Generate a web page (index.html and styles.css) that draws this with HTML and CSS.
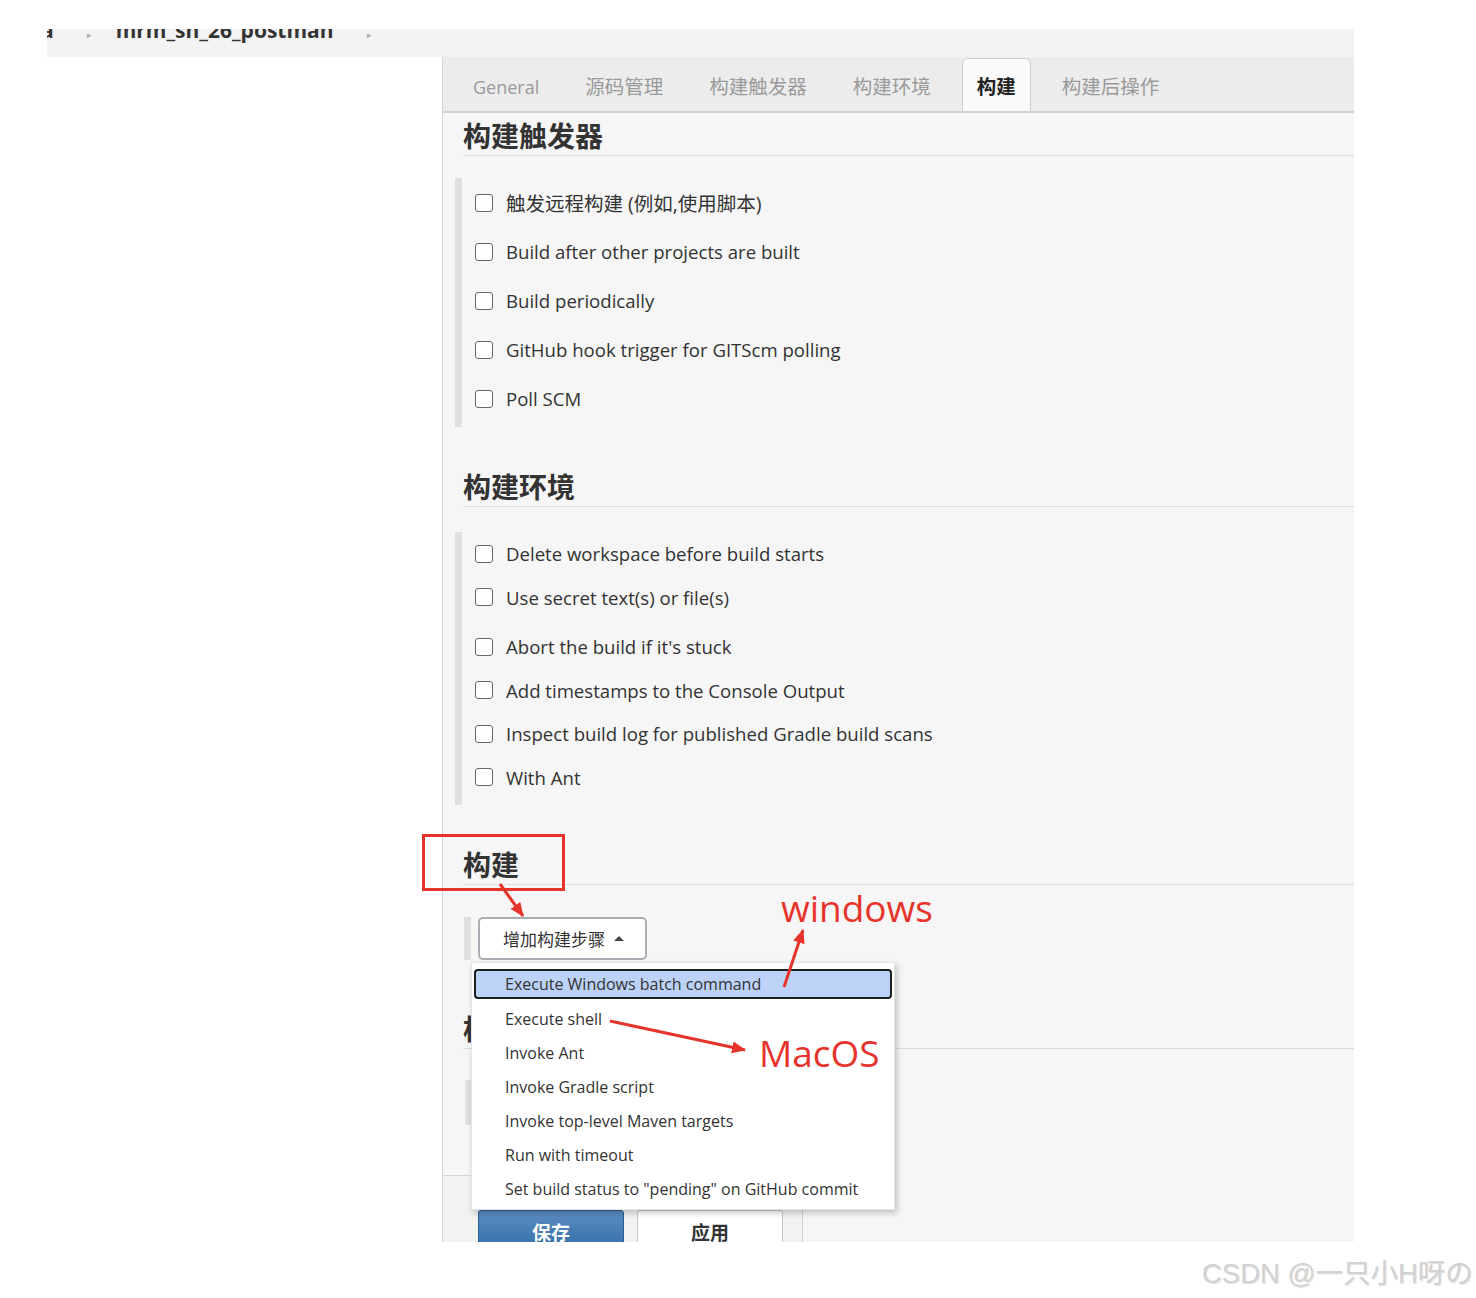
FILE: index.html
```html
<!DOCTYPE html>
<html lang="zh-CN">
<head>
    <meta charset="UTF-8">
    <meta name="viewport" content="width=device-width, initial-scale=1.0">
    <title>mrm_sh_26_postman Config [Jenkins]</title>
    <link rel="stylesheet" href="styles.css">
</head>
<body>
<div class="page">
    <div class="shot">
        <div class="crumbs">
            <div class="crumbs-line">
                <span class="crumb-cut">a</span>
                <span class="sep">▸</span>
                <span class="crumb">mrm_sh_26_postman</span>
                <span class="sep sep-last">▸</span>
            </div>
        </div>

        <div class="layout">
            <aside class="side"></aside>

            <main class="panel">
                <nav class="tabs">
                    <a class="tab tab-en">General</a>
                    <a class="tab">源码管理</a>
                    <a class="tab">构建触发器</a>
                    <a class="tab">构建环境</a>
                    <a class="tab active">构建</a>
                    <a class="tab">构建后操作</a>
                </nav>

                <section class="config-section">
                    <h2 class="section-title first">构建触发器</h2>
                    <div class="opt-group">
                        <label class="opt opt-cn"><span class="box"></span>触发远程构建 (例如,使用脚本)</label>
                        <label class="opt"><span class="box"></span>Build after other projects are built</label>
                        <label class="opt"><span class="box"></span>Build periodically</label>
                        <label class="opt"><span class="box"></span>GitHub hook trigger for GITScm polling</label>
                        <label class="opt"><span class="box"></span>Poll SCM</label>
                    </div>
                </section>

                <section class="config-section">
                    <h2 class="section-title">构建环境</h2>
                    <div class="opt-group env">
                        <label class="opt"><span class="box"></span>Delete workspace before build starts</label>
                        <label class="opt spaced"><span class="box"></span>Use secret text(s) or file(s)</label>
                        <label class="opt"><span class="box"></span>Abort the build if it's stuck</label>
                        <label class="opt"><span class="box"></span>Add timestamps to the Console Output</label>
                        <label class="opt"><span class="box"></span>Inspect build log for published Gradle build scans</label>
                        <label class="opt"><span class="box"></span>With Ant</label>
                    </div>
                </section>

                <section class="config-section">
                    <h2 class="section-title">构建</h2>
                    <div class="build-group">
                        <button class="add-step">增加构建步骤<span class="caret"></span></button>
                        <ul class="step-menu">
                            <li class="active">Execute Windows batch command</li>
                            <li>Execute shell</li>
                            <li>Invoke Ant</li>
                            <li>Invoke Gradle script</li>
                            <li>Invoke top-level Maven targets</li>
                            <li>Run with timeout</li>
                            <li>Set build status to "pending" on GitHub commit</li>
                        </ul>
                    </div>
                </section>

                <section class="config-section post">
                    <h2 class="section-title">构建后操作</h2>
                    <div class="post-group"></div>
                </section>

                <div class="bottom-bar">
                    <button class="btn btn-primary">保存</button>
                    <button class="btn btn-plain">应用</button>
                </div>
            </main>
        </div>
    </div>

    <!-- red markup drawn on top of the page -->
    <svg class="marks" width="1476" height="1298" viewBox="0 0 1476 1298">
        <defs>
            <marker id="head" markerUnits="userSpaceOnUse" markerWidth="14" markerHeight="12" refX="13" refY="6" orient="auto">
                <path d="M0,0 L14,6 L0,12 z" fill="#e6342c"/>
            </marker>
        </defs>
        <rect x="423.5" y="835.5" width="140" height="54" fill="none" stroke="#e6342c" stroke-width="3"/>
        <line x1="500" y1="884" x2="523" y2="916" stroke="#e6342c" stroke-width="3" marker-end="url(#head)"/>
        <line x1="784" y1="987" x2="803" y2="930" stroke="#e6342c" stroke-width="3" marker-end="url(#head)"/>
        <line x1="610" y1="1021" x2="745" y2="1050" stroke="#e6342c" stroke-width="3" marker-end="url(#head)"/>
    </svg>
    <div class="mark-label label-win">windows</div>
    <div class="mark-label label-mac">MacOS</div>

    <div class="watermark">CSDN @一只小H呀の</div>
</div>
</body>
</html>
```

FILE: styles.css
```css
* {
    margin: 0;
    padding: 0;
    box-sizing: border-box;
}

body {
    background-color: #fff;
    color: #333;
    font-family: "Open Sans", "Noto Sans CJK SC", sans-serif;
}

.page {
    position: relative;
    width: 1476px;
    height: 1298px;
    overflow: hidden;
}

.shot {
    margin: 29px 0 0 47px;
    width: 1307px;
}

/* breadcrumb strip */
.crumbs {
    height: 28px;
    background-color: #f3f3f3;
    overflow: hidden;
}

.crumbs-line {
    display: flex;
    align-items: baseline;
    height: 28px;
    line-height: 28px;
    margin-top: -13px;
    font-size: 21px;
    font-weight: 700;
    color: #333;
    white-space: nowrap;
}

.crumb-cut {
    margin-left: -6px;
}

.sep {
    font-size: 9px;
    font-weight: 400;
    color: #aaa;
    margin: 0 24px 0 33px;
}

.sep-last {
    margin-left: 33px;
}

/* page body */
.layout {
    display: flex;
    height: 1185px;
}

.side {
    width: 395px;
    background-color: #fff;
}

.panel {
    width: 912px;
    background-color: #f6f6f6;
    border-left: 1px solid #d6d6d6;
    overflow: hidden;
}

.tabs {
    display: flex;
    align-items: flex-end;
    height: 56px;
    padding-left: 15px;
    background-color: #ececec;
    border-bottom: 2px solid #d2d2d2;
}

.tab {
    height: 53px;
    padding: 3px 14px 0;
    margin-right: 16px;
    line-height: 50px;
    font-size: 19.5px;
    color: #9a9a9a;
    border: 1px solid transparent;
    border-bottom: none;
    border-radius: 6px 6px 0 0;
}

.tab.tab-en {
    font-size: 18px;
}

.tab.active {
    background-color: #fafafa;
    border-color: #cfcfcf;
    color: #222;
    font-weight: 700;
}

.config-section {
    padding-left: 12px;
}

.section-title {
    margin: 39px 0 0 8px;
    font-family: "Noto Sans CJK SC", sans-serif;
    font-size: 28px;
    font-weight: 700;
    line-height: 40px;
    color: #333;
    border-bottom: 1px solid #dcdcdc;
}

.section-title.first {
    margin-top: 2px;
}

.opt-group {
    margin-top: 22px;
    padding: 0 0 4px 13px;
    border-left: 7px solid #e0e0e0;
}

.opt-group.env {
    margin-top: 25px;
    padding-bottom: 6px;
}

.opt {
    display: flex;
    align-items: center;
    height: 49px;
    font-size: 18.6px;
    color: #333;
}

.opt.opt-cn {
    font-size: 19.5px;
}

.env .opt {
    height: 43.5px;
}

.env .opt.spaced {
    margin-bottom: 6px;
}

.box {
    flex: none;
    width: 18px;
    height: 18px;
    margin-right: 13px;
    background-color: #fff;
    border: 1.5px solid #666;
    border-radius: 3px;
}

/* build steps */
.build-group {
    position: relative;
    height: 43px;
    margin: 32px 0 0 9px;
    padding-left: 7px;
    border-left: 7px solid #e0e0e0;
}

.add-step {
    display: flex;
    align-items: center;
    width: 169px;
    height: 43px;
    padding-left: 23px;
    background-color: #fff;
    border: 2px solid #a9aeb4;
    border-radius: 5px;
    font-family: "Noto Sans CJK SC", sans-serif;
    font-size: 17px;
    color: #333;
}

.caret {
    width: 0;
    height: 0;
    margin-left: 9px;
    border-left: 5px solid transparent;
    border-right: 5px solid transparent;
    border-bottom: 5px solid #444;
}

.step-menu {
    position: absolute;
    top: 45px;
    left: 0;
    z-index: 5;
    width: 424px;
    padding: 5px 2px 3px 2px;
    list-style: none;
    background-color: #fff;
    border: 1px solid #e4e4e4;
    box-shadow: 2px 3px 6px rgba(0, 0, 0, 0.22);
}

.step-menu li {
    height: 34px;
    line-height: 34px;
    padding-left: 31px;
    font-size: 16px;
    color: #333;
}

.step-menu li.active {
    height: 30px;
    line-height: 26px;
    margin: 1px 0 3px;
    padding-left: 29px;
    background-color: #bcd2f7;
    border: 2px solid #1e1e1e;
    border-radius: 4px;
}

.post .section-title {
    margin-top: 48px;
}

.post-group {
    height: 45px;
    margin: 31px 0 0 10px;
    border-left: 8px solid #e0e0e0;
}

/* save / apply */
.bottom-bar {
    display: flex;
    gap: 13px;
    width: 360px;
    height: 120px;
    margin-top: 50px;
    padding: 34px 0 0 35px;
    background-color: #f1f3f0;
    border-top: 1px solid #d2dbd2;
    border-right: 1px solid #d0d0d0;
}

.btn {
    width: 146px;
    height: 46px;
    padding-bottom: 4px;
    font-family: "Noto Sans CJK SC", sans-serif;
    font-size: 19px;
    font-weight: 700;
    border-radius: 3px;
}

.btn-primary {
    color: #fff;
    background: linear-gradient(#5b8dc2, #2f6aa4);
    border: 1px solid #2b5e93;
}

.btn-plain {
    color: #333;
    background-color: #fff;
    border: 1px solid #c5c5c5;
}

/* annotations */
.marks {
    position: absolute;
    top: 0;
    left: 0;
    z-index: 10;
    pointer-events: none;
}

.mark-label {
    position: absolute;
    z-index: 10;
    font-family: "Open Sans", sans-serif;
    line-height: 40px;
    color: #e6342c;
}

.label-win {
    top: 888px;
    left: 781px;
    font-size: 37px;
}

.label-mac {
    top: 1033px;
    left: 759px;
    font-size: 37px;
}

.watermark {
    position: absolute;
    top: 1251px;
    left: 1202px;
    font-family: "Liberation Sans", "Noto Sans CJK SC", sans-serif;
    font-size: 27.5px;
    color: #d2d2d2;
    text-shadow: 1px 1px 1px rgba(0, 0, 0, 0.12);
    white-space: nowrap;
}
```
